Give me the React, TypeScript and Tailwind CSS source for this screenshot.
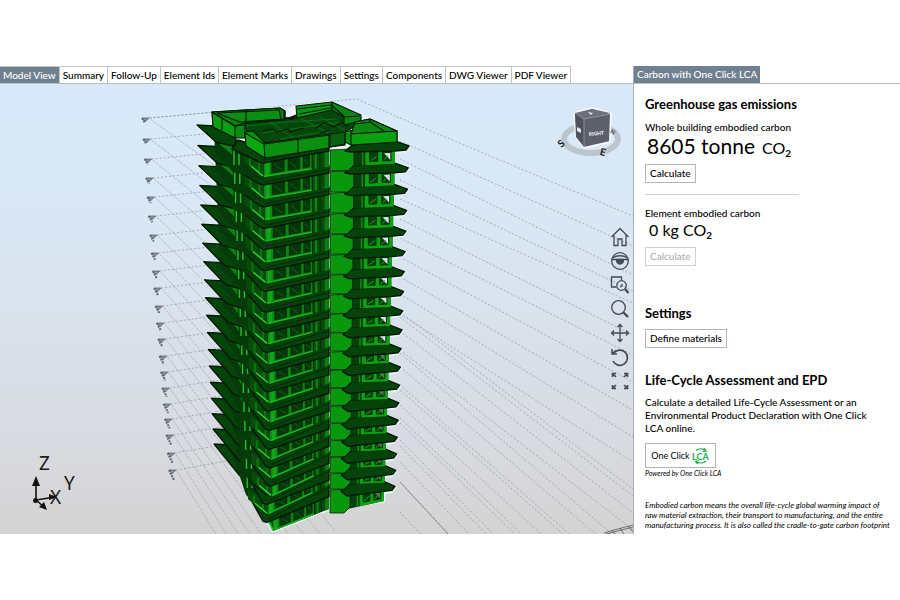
import type { ReactNode } from "react";
import clsx from "clsx";

const tabs = [
  "Model View",
  "Summary",
  "Follow-Up",
  "Element Ids",
  "Element Marks",
  "Drawings",
  "Settings",
  "Components",
  "DWG Viewer",
  "PDF Viewer",
];

const FLOORS = 19;
const floors = Array.from({ length: FLOORS }, (_, i) => FLOORS - 1 - i);

// Storey heights shrink a little towards the ground because of the perspective
const drop = (start: number, step: number, shrink: number, n: number) =>
  start + step * n - (shrink * n * (n - 1)) / 2;
const mix = (a: number, b: number, n: number) => a + ((b - a) * n) / (FLOORS - 1);
const pts = (list: number[][]) => list.map((p) => p.join(",")).join(" ");
const line = (...list: number[][]) => "M" + list.map((p) => p.join(" ")).join("L");

const geometry = (n: number) => ({
  lx: mix(197, 214, n),
  ly: drop(125, 20.5, 0.327, n),
  tx: mix(232, 246, n),
  ty: 149 + 19 * n,
  cx: n > 16 ? 267 : mix(263, 272, n),
  cy: drop(160, 22, 0.24, n),
  mx: 329,
  my: drop(149, 21.7, 0.33, n),
  px: mix(356, 352, n),
  rx: mix(409, 395, n),
  ry: drop(147, 21.8, 0.34, n),
  wx: mix(395, 384, n),
});

const markers = [
  120, 141, 161, 180, 199, 218, 237, 255, 273, 290, 308, 325, 341, 358, 374,
  390, 406, 421, 437, 455, 472,
];

// Height of each grid line at x = 400 and at the right edge
const gridLines = [
  [118, 216], [141, 246], [159, 275], [180, 291], [199, 303], [219, 335],
  [238, 355], [257, 382], [277, 410], [294, 437], [314, 462], [312, 489],
  [317, 496], [331, 513], [350, 530], [353, 552], [367, 566], [385, 590],
  [390, 596], [405, 618], [418, 640], [423, 648], [440, 675], [446, 684],
  [462, 705], [482, 730], [512, 760],
];

function Storey({ n }: { n: number }) {
  const a = geometry(n);
  const b = geometry(n + 1);
  const last = n === FLOORS - 1;
  const bottom = last ? 531 : b.cy - 5;
  const midBottom = last ? 509 : b.my - 4;
  const rightBottom = last ? 501 : b.ry - 5;
  const wallX = last ? 273 : a.cx + 1;

  // t runs along the wall, v runs down it
  const front = (t: number, v: number) => {
    const top = a.cy + (a.my - a.cy) * t;
    const low = bottom + (midBottom - bottom) * t;
    return [wallX + (a.mx - wallX) * t, top + (low - top) * v];
  };
  const right = (t: number, v: number) => {
    const top = a.my + (a.ry - a.my) * t;
    const low = midBottom - 1 + (rightBottom - midBottom + 1) * t;
    return [a.px + (a.wx - a.px) * t, top + (low - top) * v];
  };
  const quad = (f: (t: number, v: number) => number[], t0: number, t1: number, v0: number, v1: number) =>
    pts([f(t0, v0), f(t1, v0), f(t1, v1), f(t0, v1)]);
  const ldx = mix(19, 26, n);
  const ldy = mix(17, 32, n);

  return (
    <g>
      {/* wing wall and the side of the front block */}
      {last ? (
        <>
          <polygon points="240,470 246,492 266,515 273,531 273,500 262,480" fill="#07450d" />
          <path d="M266 516l7 14" stroke="#1fc426" strokeWidth="2" />
        </>
      ) : (
        <>
          <polygon
            points={pts([
              [a.lx + 17, a.ly + 4],
              [a.cx, a.cy - 6],
              [a.cx + 1, b.cy - 2],
              [b.tx, b.ty + 4],
              [b.lx + 17, b.ly + 6],
            ])}
            fill="#053b0a"
          />
          <polygon
            points={pts([
              [a.lx + ldx + 4, a.ly + ldy - 4],
              [a.tx, a.ly + ldy + 4],
              [a.tx, b.ly + ldy - 8],
              [a.lx + ldx + 4, b.ly + ldy - 18],
            ])}
            fill="#0c8013"
          />
          <path
            d={`M${a.tx + 2} ${a.ty + 1}v15M${a.tx + 7} ${a.ty + 5}v11`}
            stroke="#22c128"
            strokeWidth="1.4"
          />
          <polygon
            points={pts([
              [a.cx - 19, a.cy - 12],
              [a.cx + 1, a.cy],
              [a.cx + 1, bottom],
              [a.cx - 19, bottom - 15],
            ])}
            fill="#064d0c"
          />
          <path
            d={`M${a.cx - 13} ${a.cy - 6}V${bottom - 11}M${a.cx - 4} ${a.cy}V${bottom - 5}`}
            stroke="#0a7610"
            strokeWidth="2"
          />
          <path
            d={`M${a.cx - 12} ${bottom - 11}L${a.cx} ${bottom - 1}`}
            stroke="#2bd431"
            strokeWidth="1.4"
          />
        </>
      )}

      {/* front wall */}
      <polygon points={quad(front, 0, 1, 0, 1)} fill="#064b0b" />
      <polygon points={quad(front, 0, 0.74, 0, 1)} fill="#0b8411" />
      <polygon points={quad(front, 0.02, 0.08, 0.2, 1)} fill="#11a818" />
      <g fill="#05360a" stroke="#032407" strokeWidth="0.6">
        <polygon points={quad(front, 0.12, 0.31, 0.1, 0.84)} />
        <polygon points={quad(front, 0.37, 0.55, 0.1, 0.84)} />
        <polygon points={quad(front, 0.6, 0.7, 0.1, 0.84)} />
      </g>
      <path
        d={line(front(0.16, 0.35), front(0.27, 0.76)) + line(front(0.4, 0.35), front(0.5, 0.78)) + line(front(0.62, 0.35), front(0.68, 0.7))}
        stroke="#075a0e"
        strokeWidth="1.2"
      />
      <polygon points={quad(front, 0.78, 0.81, 0.1, 1)} fill="#0b8911" />
      <polygon points={quad(front, 0.93, 1, 0.1, 1)} fill="#0a7e10" />
      <path
        d={line(front(0, 0.96), front(0.74, 0.96))}
        stroke="#1cb922"
        strokeWidth="1.2"
      />
      <path
        d={line(front(0.74, 0), front(0.74, 1)) + line(front(0.86, 0), front(0.86, 1))}
        stroke="#021d05"
        strokeWidth="0.8"
      />

      {/* right wall */}
      <polygon points={quad(right, -0.25, 1, 0, 1)} fill="#053f0a" />
      <polygon points={quad(right, 0.24, 1, 0, 1)} fill="#0da214" />
      <path
        d={line(right(0.17, 0), right(0.17, 1))}
        stroke="#0c8f12"
        strokeWidth="1.4"
      />
      <g fill="#063f0b" stroke="#022205" strokeWidth="0.7">
        <polygon points={quad(right, 0.35, 0.56, 0.1, 0.8)} />
        <polygon points={quad(right, 0.68, 0.9, 0.1, 0.8)} />
      </g>
      <polygon
        points={pts([right(0.72, 0.34), right(0.88, 0.34), right(0.88, 0.76)])}
        fill={n < 10 ? "#dbe7f1" : "#4a7a4e"}
      />
      <path
        d={line(right(0.37, 0.76), right(0.53, 0.5)) + line(right(0.7, 0.76), right(0.82, 0.5))}
        stroke="#12a81a"
        strokeWidth="1"
      />

      {/* bright stair core */}
      <polygon
        points={pts([
          [a.mx + 1, a.my + 1],
          [a.px - 5, a.my],
          [a.px - 2, a.my + 4],
          [a.px - 2, midBottom - 2],
          [a.px - 8, midBottom + 4],
          [a.mx + 1, midBottom + 4],
        ])}
        fill="#09970d"
        stroke="#021f05"
        strokeWidth="0.8"
      />

      {/* slabs */}
      <g fill="#05430b" stroke="#021a05" strokeWidth="1.4" strokeLinejoin="round">
        <polygon
          points={pts([
            [a.lx, a.ly],
            [a.lx + 18, a.ly + 1],
            [a.tx + 3, a.ly + ldy - 9],
            [a.tx + 5, a.ly + ldy + 5],
            [a.lx + ldx, a.ly + ldy],
          ])}
        />
        <polygon
          points={pts([
            [a.tx, a.ty],
            [a.tx + 6, a.ty - 9],
            [a.cx - 12, a.cy - 16],
            [a.cx, a.cy - 6],
            [a.mx, a.my - 5],
            [a.mx, a.my + 2 + n * 0.3],
            [a.cx, a.cy + 3],
            [a.cx - 4, a.cy + 2],
          ])}
        />
        <polygon
          points={pts([
            [a.px - 11, a.my + 2],
            [a.px - 2, a.my - 5],
            [a.wx, a.ry - 6],
            [a.rx, a.ry - 1],
            [a.rx - 3, a.ry + 3],
            [a.wx, a.ry + 4],
            [a.px - 5, a.ry + 5 + n * 0.2],
          ])}
        />
      </g>
      <path
        d={line([a.cx + 1, a.cy], [a.mx - 2, a.my - 1])}
        stroke="#032a08"
        strokeWidth="1"
      />
      <path
        d={line([a.lx + 10, a.ly + 5], [a.tx - 3, a.ly + ldy - 3]) + line([a.tx + 7, a.ty - 3], [a.cx - 5, a.cy - 6])}
        stroke="#0a5810"
        strokeWidth="0.7"
        strokeDasharray="3 2"
      />
    </g>
  );
}

function Roof() {
  return (
    <g stroke="#021a05" strokeWidth="1.1" strokeLinejoin="round">
      <polygon
        points="243,123 285,119 297,115 331,107 348,115 357,124 345,133 345,145 330,147 264,150 248,134"
        fill="#06480c"
      />
      <path
        d="M246 126l40-4 50-3M262 133l66-9 20-3M280 139l48-8M300 118l30 16M270 122l24 16M320 117l24 13"
        fill="none"
        stroke="#0d7a14"
        strokeWidth="0.8"
      />
      <path
        d="M262 131l12-2 2 3 12-3 2 3 14-4M316 128l8-5 10 4 8-5 6 5M320 133l10-3"
        fill="none"
        strokeWidth="1.2"
      />
      <polygon
        points="212,112 280,108 285,111 285,120 245,123 245,138 235,138 213,127"
        fill="#0b8a12"
      />
      <polygon points="212,112 235,126 235,138 213,127" fill="#0a9e10" />
      <polygon points="212,112 280,108 285,111 285,119 245,123 235,126" fill="#0a7f10" />
      <polygon points="217,113 279,110 281,119 240,122" fill="#0b8f12" />
      <path d="M212 112l23 14 10-1M246 110v11M222 119v11M284 111v9" fill="none" />
      <polygon points="296,106 332,102 332,110 297,118" fill="#0b9412" />
      <polygon points="332,102 361,115 361,121 344,125 344,117 332,110" fill="#0a8310" />
      <path d="M297 109l34-4 13 11M299 114l32-6M344 117l16-1" fill="none" />
      <path d="M286 118l6 1 4-4" fill="none" strokeWidth="2" />
      <polygon
        points="345,132 354,130 355,122 370,119 397,131 397,142 351,145 345,142"
        fill="#0a8f11"
      />
      <polygon points="355,122 370,119 397,131 351,134" fill="#0a8811" />
      <path d="M355 124l15-2 14 9M370 119v3" fill="none" />
      <polygon points="351,134 397,131 397,142 351,145" fill="#0aa010" />
      <polygon points="330,134 345,132 345,144 330,147" fill="#07600d" />
      <polygon
        points="245,132 253,131 265,143 329,134 329,148 265,158 246,146"
        fill="#0a8f11"
      />
      <polygon points="245,133 264,144 265,158 246,146" fill="#0aa710" />
      <path d="M298 139v13M264 144l66-9" fill="none" />
    </g>
  );
}

function ModelCanvas() {
  return (
    <svg
      viewBox="0 84 633 450"
      role="img"
      aria-label="3D building model"
      className="block h-auto w-full"
    >
      <defs>
        <linearGradient id="sky" x1="0" y1="0" x2="0" y2="1">
          <stop offset="0" stopColor="#d7e9fa" />
          <stop offset="0.25" stopColor="#d9e8f6" />
          <stop offset="0.6" stopColor="#d9dfe9" />
          <stop offset="0.85" stopColor="#d8d9dd" />
          <stop offset="1" stopColor="#d3d3d3" />
        </linearGradient>
      </defs>
      <rect x="0" y="84" width="633" height="450" fill="url(#sky)" />

      {/* level grid */}
      <g fill="none" stroke="#8b939d" strokeWidth="0.7" strokeDasharray="2 2">
        <path d="M150 118L357 99L400 118" />
        {markers.map((y, i) => {
          const x = 149 + i * 1.35;
          return <path key={y} d={`M${x} ${y - 2}l68 -${6 + i * 0.3}`} />;
        })}
        {gridLines.map(([y0, y1]) => (
          <path key={y0} d={`M400 ${y0}L633 ${y1}`} />
        ))}
      </g>
      <g fill="none" stroke="#98a0aa" strokeWidth="0.6" strokeDasharray="3 1">
        {markers.map((y, i) => {
          const x = 150 + i * 1.35;
          const slope = 0.72 + i * 0.045;
          return <path key={y} d={`M${x} ${y - 1}l170 ${170 * slope}`} />;
        })}
      </g>
      <path d="M400 482L448 534" stroke="#777" strokeWidth="0.7" />
      <g fill="#5e6670" stroke="#5e6670" strokeWidth="0.8">
        {markers.map((y, i) => {
          const x = 142 + i * 1.35;
          return (
            <g key={y}>
              <path d={`M${x} ${y - 2}l7 0l-4 4z`} fill="#8a929c" />
              <path
                d={`M${x} ${y - 2}l${3 + i * 0.1} ${5 + i * 0.25}`}
                strokeDasharray="2 1"
                strokeWidth="2"
              />
            </g>
          );
        })}
      </g>
      <path
        d="M604 533l10-3 19-5M606 534l27-7M612 530l3 4M620 528l4 6M628 526l5 6"
        fill="none"
        stroke="#555"
        strokeWidth="0.8"
      />

      {/* light rim behind the tower */}
      <g fill="#eef4fa" stroke="#eef4fa" strokeWidth="3" strokeLinejoin="round">
        {floors.map((n) => {
          const g = geometry(n);
          return (
            <polygon
              key={n}
              points={pts([
                [g.lx, g.ly],
                [g.wx, g.ry - 6],
                [g.rx, g.ry],
                [g.rx - 4, g.ry + 4],
                [g.cx, g.cy],
                [g.lx + 20, g.ly + 20],
              ])}
            />
          );
        })}
        <path d="M212 112l68-4 6 4 10-6 36-4 30 14 8 3 27 12v12H212z" />
        <path d="M246 493l20 27 7 11 56-22 55-8v-14z" />
      </g>
      {floors.map((n) => (
        <Storey key={n} n={n} />
      ))}
      <Roof />

      {/* axes */}
      <g stroke="#111" fill="#111" strokeWidth="1.6">
        <path d="M36 500V482M36 500l19-3M36 500l8 7" fill="none" />
        <path d="M36 476l4 10h-8zM57 497l-8-3v6zM47 510l-8-3 5-5z" stroke="none" />
        <circle cx="35.500" cy="500.500" r="2.500" stroke="none" />
      </g>
      <g fill="#1c1c1c" fontFamily="Noto Sans, sans-serif" fontSize="19">
        <text x="39" y="470">Z</text>
        <text x="64" y="490">Y</text>
        <text x="50" y="504">X</text>
      </g>

      {/* view cube */}
      <ellipse cx="591" cy="139" rx="27" ry="14" fill="none" stroke="#bcc4cd" strokeWidth="6" />
      <path
        d="M574 113L592 108L611 113L610 142L584 148L576 137z"
        fill="#5b606b"
        stroke="#f4f7fa"
        strokeWidth="2"
      />
      <path d="M575 113L592 109L610 113L584 119z" fill="#6c717b" />
      <path d="M575 113L584 119V147L576 137z" fill="#4d525c" />
      <path d="M575 113l9 6 26-5M584 119v28" stroke="#9aa0a9" strokeWidth="0.8" fill="none" />
      <path d="M577 127l4 2v4l-4-2zM588 112l5 1-2 2" fill="#e5e8ec" />
      <g fontFamily="Lato, sans-serif" fontWeight="700">
        <text x="589" y="136" fontSize="5" fill="#fff" transform="rotate(-6 590 136)">RIGHT</text>
        <text x="558" y="147" fontSize="10" fill="#222" transform="rotate(-40 561 143)">S</text>
        <text x="600" y="156" fontSize="10" fill="#222" transform="rotate(15 604 153)">E</text>
        <text x="611" y="134" fontSize="6" fill="#444" transform="rotate(30 613 131)">N</text>
      </g>
    </svg>
  );
}

const tools: { label: string; icon: ReactNode }[] = [
  {
    label: "Home",
    icon: <path d="M1.500 10L10 1.500l8.500 8.500M4 8v10.500h4V12h4v6.500h4V8" />,
  },
  {
    label: "Orbit",
    icon: (
      <>
        <circle cx="10" cy="10" r="8.300" />
        <path d="M2.500 7c4-3 11-3 15 0M1.800 8.500h16.400" />
        <path d="M6.500 8.500h7c0 6-7 6-7 0z" fill="#454b54" />
      </>
    ),
  },
  {
    label: "Zoom window",
    icon: (
      <>
        <path d="M6 12H1.500V2h10v3" />
        <circle cx="11.500" cy="10.500" r="4.800" />
        <path d="M10 12l2-1v-2" />
        <path d="M15 14l3.500 4" strokeWidth="2.200" />
      </>
    ),
  },
  {
    label: "Zoom",
    icon: (
      <>
        <circle cx="8.500" cy="8.500" r="6.800" />
        <path d="M13.500 13.500l4.500 4.500" strokeWidth="2.400" />
      </>
    ),
  },
  {
    label: "Pan",
    icon: (
      <path d="M10 1.500v17M1.500 10h17M7.500 4L10 1.500 12.500 4M7.500 16l2.500 2.500 2.500-2.500M4 7.500L1.500 10 4 12.500M16 7.500l2.500 2.500-2.500 2.500" />
    ),
  },
  {
    label: "Rotate",
    icon: (
      <>
        <path d="M3.500 6.500a7.600 7.600 0 1 1-0.500 7.500" strokeWidth="1.700" />
        <path d="M2 2v5h5M2.500 6.500l3-3" strokeWidth="1.500" />
      </>
    ),
  },
  {
    label: "Full screen",
    icon: (
      <path d="M2.500 2.500L6 6M2.500 6V2.500H6M17.500 2.500L14 6M14 2.500h3.500V6M2.500 17.500L6 14M2.500 14v3.500H6M17.500 17.500L14 14M17.500 14v3.500H14" strokeWidth="1.600" />
    ),
  },
];

function Toolbar() {
  return (
    <div className="absolute top-[141px] right-[3px] flex flex-col">
      {tools.map((tool) => (
        <button
          key={tool.label}
          type="button"
          aria-label={tool.label}
          className="flex h-6 w-5 items-center justify-center"
        >
          <svg
            viewBox="0 0 20 20"
            className="size-5"
            fill="none"
            stroke="#454b54"
            strokeWidth="1.300"
          >
            {tool.icon}
          </svg>
        </button>
      ))}
    </div>
  );
}

function PanelButton({ children, disabled }: { children: ReactNode; disabled?: boolean }) {
  return (
    <button
      type="button"
      disabled={disabled}
      className="flex h-[19px] items-center border border-[#b5b5b5] bg-white px-1 text-[10px] font-medium disabled:border-[#d0d0d0] disabled:text-[#adadad]"
    >
      {children}
    </button>
  );
}

function Co2() {
  return (
    <span className="text-[16px]">
      CO<sub className="text-[10px] leading-none font-bold">2</sub>
    </span>
  );
}

function CarbonPanel() {
  return (
    <div className="flex flex-col items-start pl-[11px]">
      <h2 className="mt-3 text-[13px] leading-4 font-bold">Greenhouse gas emissions</h2>
      <p className="mt-[7px] text-[10px] leading-4 font-medium">Whole building embodied carbon</p>
      <p className="flex h-6 items-baseline gap-[7px] pl-[2px] text-[21px] leading-[22px]">
        8605 tonne
        <Co2 />
      </p>
      <div className="mt-[5px]">
        <PanelButton>Calculate</PanelButton>
      </div>
      <hr className="mt-[11px] w-[154px] border-[#cfcfcf]" />
      <p className="mt-[10px] text-[10px] leading-4 font-medium">Element embodied carbon</p>
      <p className="h-5 pl-1 text-[16px] leading-[18px]">
        0 kg <Co2 />
      </p>
      <div className="mt-[6px]">
        <PanelButton disabled>Calculate</PanelButton>
      </div>

      <h2 className="mt-[39px] text-[13px] leading-4 font-bold">Settings</h2>
      <div className="mt-2">
        <PanelButton>Define materials</PanelButton>
      </div>

      <h2 className="mt-6 text-[13px] leading-4 font-bold">Life-Cycle Assessment and EPD</h2>
      <p className="mt-2 text-[10px] leading-[13px] font-medium">
        Calculate a detailed Life-Cycle Assessment or an
        <br />
        Environmental Product Declaration with One Click
        <br />
        LCA online.
      </p>
      <button
        type="button"
        className="mt-2 flex h-[25px] w-[71px] items-center justify-center gap-[2px] border border-[#b5b5b5] text-[9px]"
      >
        One Click
        <svg viewBox="0 0 18 18" className="size-[18px]">
          <path
            d="M4 3.500a7.500 7.500 0 0 1 9.500 0M14 14a7.500 7.500 0 0 1-9.500 0.500M12 1l2 3-3 0.500M6 17l-2.500-2.500 3-1"
            fill="none"
            stroke="#22b14c"
            strokeWidth="1.300"
          />
          <text x="0" y="12.500" fontSize="9" fontFamily="Lato, sans-serif" fontWeight="700" fill="#22b14c">
            LCA
          </text>
        </svg>
      </button>
      <p className="text-[7px] leading-[10px] italic">Powered by One Click LCA</p>
      <p className="mt-[22px] text-[8px] leading-[10px] whitespace-nowrap italic">
        Embodied carbon means the overall life-cycle global warming impact of
        <br />
        raw material extraction, their transport to manufacturing, and the entire
        <br />
        manufacturing process. It is also called the cradle-to-gate carbon footprint
      </p>
    </div>
  );
}

export default function App() {
  return (
    <main className="flex items-stretch bg-white pt-[66px] font-['Lato',sans-serif] text-black">
      <section className="min-w-0 flex-1">
        <div role="tablist" className="flex h-[18px] border-b border-[#b9bfc5]">
          {tabs.map((tab, i) => (
            <button
              key={tab}
              type="button"
              role="tab"
              aria-selected={i === 0}
              className={clsx(
                "border-t border-r border-[#c4c4c4] px-[3px] text-[10px] font-medium whitespace-nowrap",
                i === 0 ? "bg-[#6f8190] text-white" : "bg-white"
              )}
            >
              {tab}
            </button>
          ))}
        </div>
        <div className="relative">
          <ModelCanvas />
          <Toolbar />
        </div>
      </section>

      <aside className="w-[267px] shrink-0 border-l border-[#a9afb6]">
        <div role="tablist" className="flex h-[18px] border-b border-[#b9bfc5]">
          <button
            type="button"
            role="tab"
            aria-selected
            className="bg-[#6f8190] px-[3px] text-[10px] font-medium text-white"
          >
            Carbon with One Click LCA
          </button>
        </div>
        <CarbonPanel />
      </aside>
    </main>
  );
}
